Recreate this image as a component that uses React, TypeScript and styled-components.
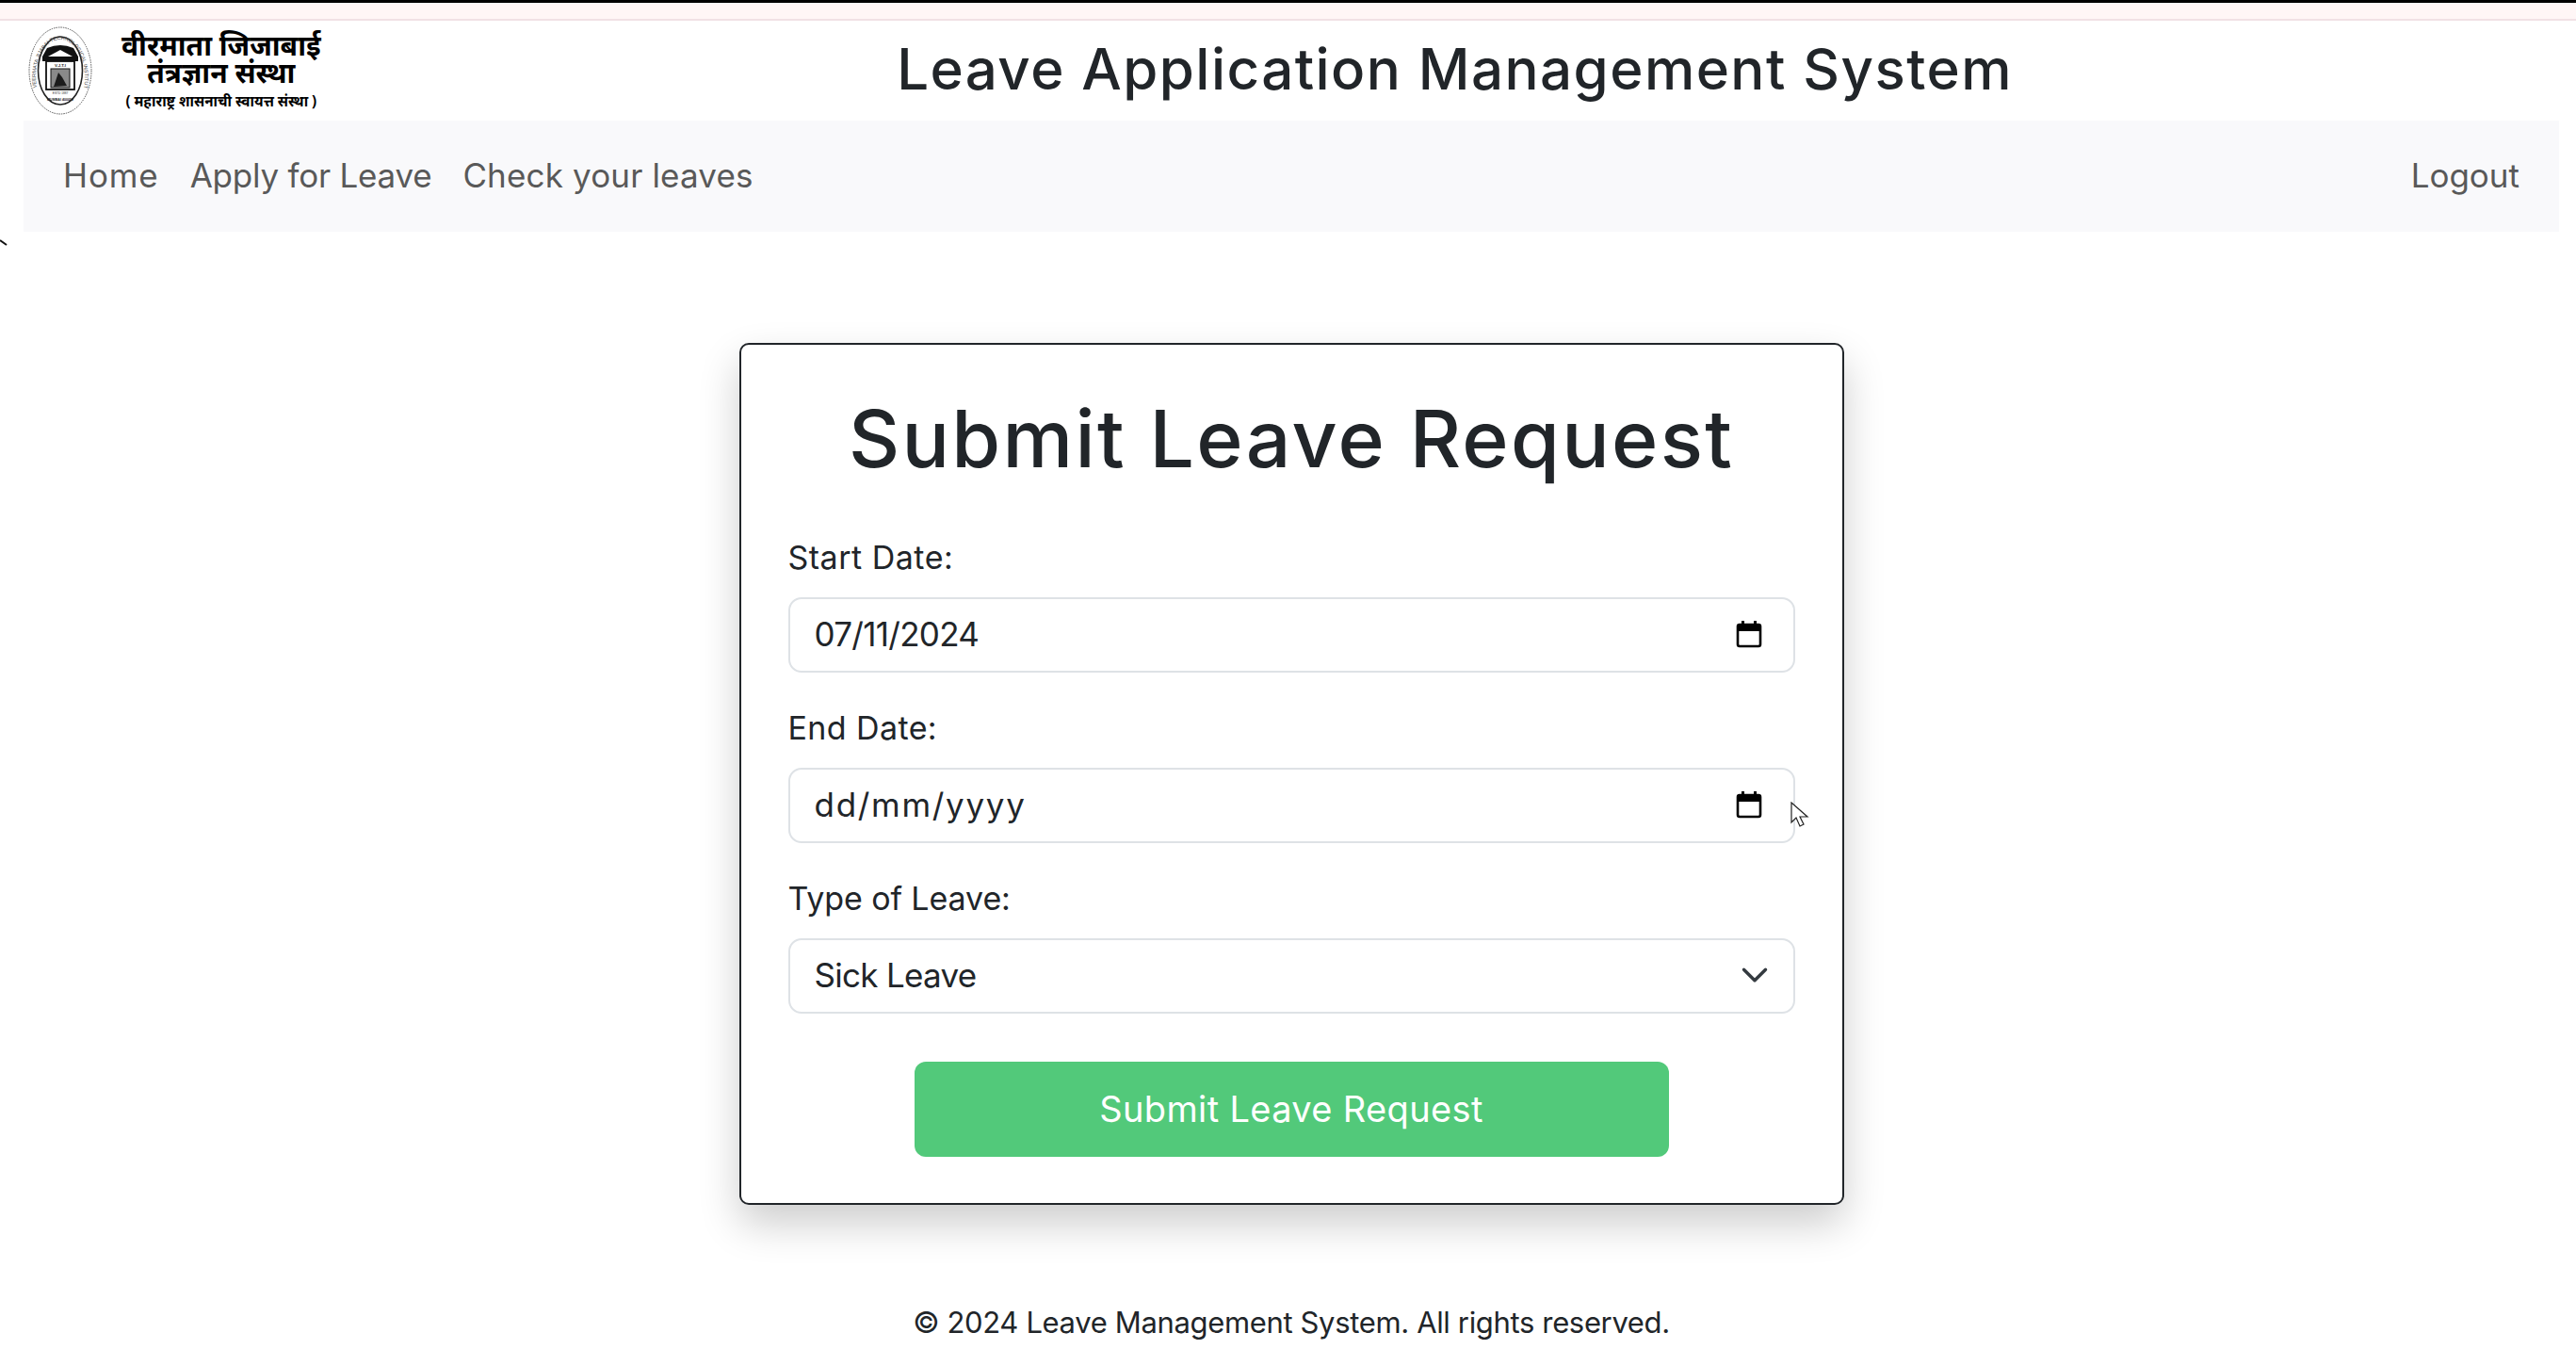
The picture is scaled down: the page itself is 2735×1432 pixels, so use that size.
import React from "react";
import styled, { createGlobalStyle } from "styled-components";
import { ChevronDown } from "lucide-react";

const Global = createGlobalStyle`
  html, body { margin: 0; padding: 0; background: #fff; }
  body { font-family: Inter, "Liberation Sans", sans-serif; color: #212529; }
`;

const Page = styled.div`
  position: relative;
  width: 2735px;
  height: 1432px;
  overflow: hidden;
`;

const TopStrip = styled.div`
  height: 17px;
  background: #fff6f6;
  border-top: 3px solid #000;
  border-bottom: 2px solid #f1e1e5;
`;

const Container = styled.div`
  padding: 0 18px 0 25px;
`;

const Header = styled.header`
  display: flex;
  align-items: center;
  height: 106px;
`;

const Brand = styled.div`
  display: flex;
  align-items: center;
  gap: 31px;
  width: 347px;
  padding-left: 5px;
  box-sizing: border-box;
`;

const SealSvg = styled.svg`
  overflow: visible;
  flex: none;
`;

const BrandText = styled.div`
  display: flex;
  flex-direction: column;
  align-items: center;
  padding-top: 6px;
  color: #000;
  font-family: "Noto Sans", "DejaVu Sans", sans-serif;
  font-weight: 700;
`;

const BrandLine = styled.div<{ $size: number; $height: number }>`
  font-size: ${(p) => p.$size}px;
  line-height: ${(p) => p.$height}px;
  height: ${(p) => p.$height}px;
  white-space: nowrap;
`;

const Title = styled.h1`
  flex: 1;
  margin: -4px 0 0;
  text-align: center;
  font-size: 60px;
  font-weight: 500;
  letter-spacing: 1.45px;
  color: #212529;
`;

const Nav = styled.nav`
  display: flex;
  align-items: center;
  height: 118px;
  padding: 0 42px 3px;
  box-sizing: border-box;
  gap: 33px;
  background: #f9f9fb;
`;

const NavLink = styled.a<{ $right?: boolean; $tracking?: number }>`
  font-size: 35px;
  color: #595959;
  letter-spacing: ${(p) => p.$tracking ?? 0}px;
  margin-left: ${(p) => (p.$right ? "auto" : "0")};
`;

const Main = styled.main`
  display: flex;
  justify-content: center;
  padding-top: 118px;
`;

const Card = styled.form`
  box-sizing: border-box;
  width: 1173px;
  height: 915px;
  padding: 44px 50px 50px;
  background: #fff;
  border: 2px solid #212529;
  border-radius: 10px;
  box-shadow: 0 20px 44px rgba(0, 0, 0, 0.2);
`;

const Heading = styled.h2`
  margin: 0 0 45px;
  text-align: center;
  font-size: 84px;
  line-height: 112px;
  font-weight: 500;
  letter-spacing: 2.3px;
  color: #212529;
`;

const Group = styled.div`
  margin-bottom: 34px;
`;

const Label = styled.label<{ $tracking?: number }>`
  display: block;
  font-size: 34px;
  line-height: 50px;
  letter-spacing: ${(p) => p.$tracking ?? 0}px;
  margin-bottom: 17px;
`;

const Field = styled.div`
  box-sizing: border-box;
  display: flex;
  align-items: center;
  justify-content: space-between;
  height: 80px;
  padding: 0 26px 2px;
  border: 2px solid #dee2e6;
  border-radius: 14px;
  font-size: 35px;
  color: #212529;
`;

const FieldValue = styled.span<{ $tracking: number }>`
  letter-spacing: ${(p) => p.$tracking}px;
`;

const Chevron = styled(ChevronDown)`
  margin-right: -8px;
`;

const CalendarSvg = styled.svg`
  margin-right: 7px;
`;

const SubmitButton = styled.button`
  display: block;
  width: 801px;
  height: 101px;
  margin: 51px auto 0;
  padding: 0 0 2px;
  border: none;
  border-radius: 12px;
  background: #52c97a;
  color: #fff;
  font-family: inherit;
  font-size: 38px;
  letter-spacing: 0.35px;
`;

const Footer = styled.footer`
  text-align: center;
  margin-top: 102px;
  font-size: 31px;
  line-height: 46px;
  letter-spacing: -0.35px;
  color: #212529;
`;

const Cursor = styled.svg`
  position: absolute;
  left: 1901px;
  top: 851px;
`;

const StrayMark = styled.svg`
  position: absolute;
  left: 0;
  top: 254px;
`;

const Seal = () => (
  <SealSvg width="68" height="96" viewBox="0 0 68 96">
    <defs>
      <path id="sealArc" d="M 9 66 A 26 40 0 1 1 59 66" fill="none" />
    </defs>
    <ellipse cx="34" cy="48" rx="33" ry="46" fill="#fff" stroke="#555" strokeWidth="1" strokeDasharray="1.5 1" />
    <ellipse cx="34" cy="48" rx="23.5" ry="36" fill="none" stroke="#222" strokeWidth="1.6" />
    <text fontSize="5.6" fill="#444" fontFamily="Liberation Sans, sans-serif">
      <textPath href="#sealArc">VEERMATA JIJABAI TECHNOLOGICAL INSTITUTE</textPath>
    </text>
    {/* roof */}
    <path d="M15 33 L20 24 Q34 18 48 24 L53 33 L53 38 L15 38 Z" fill="#111" />
    <path d="M21 33 L34 26 L47 33 Z" fill="#fff" />
    {/* frame */}
    <rect x="19" y="38" width="30" height="30" fill="#fff" stroke="#111" strokeWidth="1.8" />
    <text x="34" y="44" fontSize="4.4" fontWeight="700" textAnchor="middle" fill="#222" fontFamily="Liberation Sans, sans-serif">V.J.T.I</text>
    <rect x="24" y="46" width="20" height="20" fill="#8a8a8a" stroke="#111" />
    <path d="M27 65 L32 50 L36 55 L41 64 Z" fill="#1c1c1c" />
    <text x="34" y="73" fontSize="3.2" textAnchor="middle" fill="#333" fontFamily="Liberation Sans, sans-serif">ESTD 1887</text>
    <text x="34" y="80" fontSize="3.6" fontWeight="700" textAnchor="middle" fill="#222" fontFamily="Liberation Sans, sans-serif">MUMBAI 400019</text>
  </SealSvg>
);

const CalendarIcon = () => (
  <CalendarSvg width="28" height="30" viewBox="0 0 28 30">
    <rect x="2" y="5" width="24" height="23" rx="2" fill="none" stroke="#000" strokeWidth="2.6" />
    <rect x="2" y="5" width="24" height="7" fill="#000" />
    <rect x="6" y="1" width="3" height="5" fill="#000" />
    <rect x="19" y="1" width="3" height="5" fill="#000" />
  </CalendarSvg>
);

export default function App() {
  return (
    <Page>
      <Global />
      <TopStrip />
      <Container>
        <Header>
          <Brand>
            <Seal />
            <BrandText>
              <BrandLine $size={30} $height={29}>वीरमाता जिजाबाई</BrandLine>
              <BrandLine $size={30} $height={30}>तंत्रज्ञान संस्था</BrandLine>
              <BrandLine $size={15.2} $height={31}>( महाराष्ट्र शासनाची स्वायत्त संस्था )</BrandLine>
            </BrandText>
          </Brand>
          <Title>Leave Application Management System</Title>
        </Header>
        <Nav>
          <NavLink $tracking={0.9}>Home</NavLink>
          <NavLink $tracking={-0.23}>Apply for Leave</NavLink>
          <NavLink $tracking={0.15}>Check your leaves</NavLink>
          <NavLink $right>Logout</NavLink>
        </Nav>
        <Main>
          <Card>
            <Heading>Submit Leave Request</Heading>
            <Group>
              <Label $tracking={0.5}>Start Date:</Label>
              <Field>
                <FieldValue $tracking={-0.7}>07/11/2024</FieldValue>
                <CalendarIcon />
              </Field>
            </Group>
            <Group>
              <Label $tracking={0.4}>End Date:</Label>
              <Field>
                <FieldValue $tracking={1.7}>dd/mm/yyyy</FieldValue>
                <CalendarIcon />
              </Field>
            </Group>
            <Group>
              <Label $tracking={-0.1}>Type of Leave:</Label>
              <Field>
                <FieldValue $tracking={-0.7}>Sick Leave</FieldValue>
                <Chevron size={46} color="#343a40" strokeWidth={1.8} />
              </Field>
            </Group>
            <SubmitButton type="button">Submit Leave Request</SubmitButton>
          </Card>
        </Main>
        <Footer>© 2024 Leave Management System. All rights reserved.</Footer>
      </Container>
      <StrayMark width="10" height="10" viewBox="0 0 10 10">
        <path d="M0 1 L7 6" stroke="#111" strokeWidth="2" fill="none" />
      </StrayMark>
      <Cursor width="20" height="28" viewBox="0 0 20 28">
        <path d="M1 1 L1 22 L6 17 L10 26 L14 24 L10 16 L18 16 Z" fill="#fff" stroke="#222" strokeWidth="1.2" />
      </Cursor>
    </Page>
  );
}
